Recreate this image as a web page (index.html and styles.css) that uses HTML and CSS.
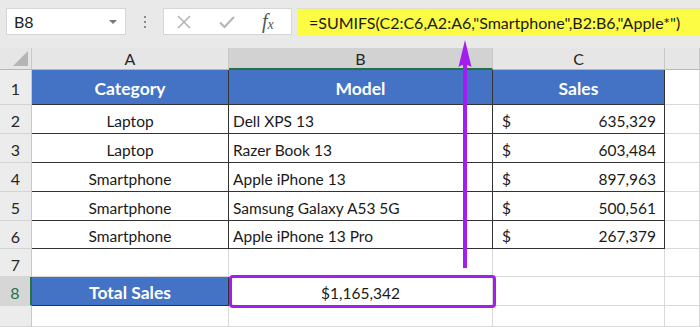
FILE: index.html
```html
<!DOCTYPE html>
<html>
<head>
<meta charset="utf-8">
<link rel="stylesheet" href="styles.css">
</head>
<body>
<div class="app">
  <div class="toolbar">
    <div class="namebox"><span>B8</span><span class="caret"></span></div>
    <div class="grip"><i></i><i></i><i></i></div>
    <div class="fxbox">
      <svg class="ico-x" width="14" height="14" viewBox="0 0 14 14"><path d="M1 1L13 13M13 1L1 13" stroke="#b4b4b4" stroke-width="1.6" fill="none"/></svg>
      <svg class="ico-check" width="16" height="14" viewBox="0 0 16 14"><path d="M1 7.5L5.5 12L15 2" stroke="#b4b4b4" stroke-width="2" fill="none"/></svg>
      <span class="fx">f<sub>x</sub></span>
    </div>
    <div class="formula">=SUMIFS(C2:C6,A2:A6,"Smartphone",B2:B6,"Apple*")</div>
  </div>
  <div class="sheet">
    <div class="corner"><span class="tri"></span></div>
    <div class="ch">A</div>
    <div class="ch sel">B</div>
    <div class="ch">C</div>
    <div class="ch"></div>

    <div class="rh">1</div>
    <div class="c t hd">Category</div>
    <div class="c t hd">Model</div>
    <div class="c t hd">Sales</div>
    <div class="c"></div>

    <div class="rh">2</div>
    <div class="c t ctr">Laptop</div>
    <div class="c t lft">Dell XPS 13</div>
    <div class="c t money"><span>$</span><span>635,329</span></div>
    <div class="c"></div>

    <div class="rh">3</div>
    <div class="c t ctr">Laptop</div>
    <div class="c t lft">Razer Book 13</div>
    <div class="c t money"><span>$</span><span>603,484</span></div>
    <div class="c"></div>

    <div class="rh">4</div>
    <div class="c t ctr">Smartphone</div>
    <div class="c t lft">Apple iPhone 13</div>
    <div class="c t money"><span>$</span><span>897,963</span></div>
    <div class="c"></div>

    <div class="rh">5</div>
    <div class="c t ctr">Smartphone</div>
    <div class="c t lft">Samsung Galaxy A53 5G</div>
    <div class="c t money"><span>$</span><span>500,561</span></div>
    <div class="c"></div>

    <div class="rh">6</div>
    <div class="c t ctr">Smartphone</div>
    <div class="c t lft">Apple iPhone 13 Pro</div>
    <div class="c t money"><span>$</span><span>267,379</span></div>
    <div class="c"></div>

    <div class="rh">7</div>
    <div class="c"></div>
    <div class="c"></div>
    <div class="c"></div>
    <div class="c"></div>

    <div class="rh rsel">8</div>
    <div class="c t hd">Total Sales</div>
    <div class="c ctr">$1,165,342</div>
    <div class="c"></div>
    <div class="c"></div>

    <div class="rh"></div>
    <div class="c"></div>
    <div class="c"></div>
    <div class="c"></div>
    <div class="c"></div>
  </div>
  <div class="hilite"></div>
  <svg class="arrow" width="700" height="327" viewBox="0 0 700 327">
    <line x1="465" y1="60" x2="465" y2="268" stroke="#a31df0" stroke-width="4"/>
    <path d="M465 40 L458.5 67 Q465 62 471.5 67 Z" fill="#a31df0"/>
  </svg>
</div>
</body>
</html>
```
FILE: styles.css
```css
html, body {
  margin: 0;
  padding: 0;
}
body {
  width: 700px;
  height: 327px;
  overflow: hidden;
  background: #e6e6e6;
  font-family: Lato, "Open Sans", sans-serif;
  font-size: 15.5px;
  color: #1a1a1a;
}
.app {
  position: relative;
  width: 700px;
  height: 327px;
}
.toolbar {
  height: 48px;
  box-sizing: border-box;
  padding-top: 8px;
  padding-left: 6px;
  display: flex;
  align-items: flex-start;
  background: #e9e9e9;
}
.namebox {
  width: 120px;
  height: 27px;
  box-sizing: border-box;
  background: #fff;
  border: 1px solid #d6d6d6;
  display: flex;
  align-items: center;
  justify-content: space-between;
  padding: 0 8px 0 7px;
  font-size: 16px;
  color: #222;
}
.caret {
  width: 0;
  height: 0;
  border-left: 4px solid transparent;
  border-right: 4px solid transparent;
  border-top: 4px solid #777;
}
.grip {
  width: 37px;
  height: 27px;
  display: flex;
  flex-direction: column;
  align-items: center;
  justify-content: center;
  gap: 3px;
}
.grip i {
  display: block;
  width: 2px;
  height: 2px;
  background: #8a8a8a;
}
.fxbox {
  width: 129px;
  height: 27px;
  box-sizing: border-box;
  background: #fff;
  border: 1px solid #d6d6d6;
  display: flex;
  align-items: center;
  padding-left: 13px;
}
.ico-x { margin-right: 28px; }
.ico-check { margin-right: 27px; }
.fx {
  font-family: "Liberation Serif", serif;
  font-style: italic;
  font-size: 20px;
  color: #555;
  line-height: 1;
}
.fx sub {
  font-size: 14px;
  vertical-align: -1px;
}
.formula {
  margin-left: 5px;
  flex: 1;
  height: 27px;
  box-sizing: border-box;
  background: #fcfc45;
  border-top: 1px solid #e0e0c0;
  display: flex;
  align-items: center;
  padding-left: 12px;
  font-size: 16px;
  color: #1a1a1a;
  white-space: nowrap;
}
.sheet {
  display: grid;
  grid-template-columns: 32px 197px 264px 172px 35px;
  grid-template-rows: 22px 35px 29px 29px 29px 29px 28px 28px 29px 21px;
  background: #fff;
}
.sheet > div {
  box-sizing: border-box;
  display: flex;
  align-items: center;
}
.corner {
  background: #e6e6e6;
  border-right: 1px solid #c8c8c8;
  border-bottom: 1px solid #b8b8b8;
  position: relative;
}
.tri {
  position: absolute;
  right: 3px;
  bottom: 3px;
  width: 0;
  height: 0;
  border-left: 15px solid transparent;
  border-bottom: 15px solid #b5b5b5;
}
.ch {
  background: #e6e6e6;
  border-right: 1px solid #c8c8c8;
  border-bottom: 1px solid #b8b8b8;
  justify-content: center;
  color: #262626;
  font-size: 16px;
}
.ch.sel {
  background: #d2d2d2;
  border-bottom: 2px solid #217346;
}
.rh {
  background: #ececec;
  border-right: 1px solid #c8c8c8;
  border-bottom: 1px solid #d4d4d4;
  justify-content: center;
  color: #262626;
  font-size: 16px;
  padding-top: 3px;
}
.rh.rsel {
  background: #d6d6d6;
  border-right: 2px solid #217346;
  color: #217346;
}
.c {
  border-right: 1px solid #d9d9d9;
  border-bottom: 1px solid #d9d9d9;
  padding-top: 3px;
}
.c.t {
  border-right: 1px solid #333;
  border-bottom: 1px solid #333;
}
.hd {
  background: #4472c4;
  color: #fff;
  font-weight: bold;
  font-size: 17.5px;
  justify-content: center;
}
.ctr { justify-content: center; }
.lft { padding-left: 4px; }
.money {
  justify-content: space-between;
  padding-left: 9px;
  padding-right: 8px;
}
.hilite {
  position: absolute;
  left: 229px;
  top: 275px;
  width: 267px;
  height: 33px;
  box-sizing: border-box;
  border: 3.5px solid #a31df0;
  border-radius: 4px;
}
.arrow {
  position: absolute;
  left: 0;
  top: 0;
  pointer-events: none;
}
```
